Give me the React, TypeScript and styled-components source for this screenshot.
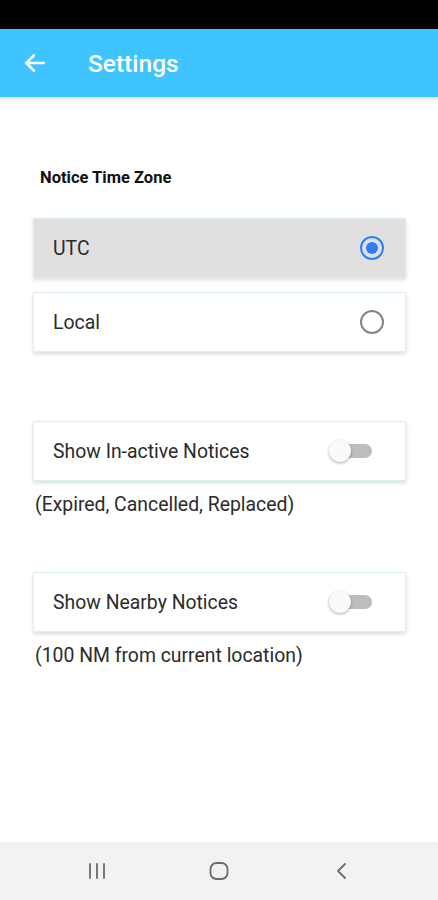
import React, { useState } from 'react';
import styled, { createGlobalStyle } from 'styled-components';

const GlobalStyle = createGlobalStyle`
  html, body {
    margin: 0;
    padding: 0;
    background: #ffffff;
    font-family: Roboto, "Noto Sans", Arial, sans-serif;
  }
  * { box-sizing: border-box; }
`;

const Screen = styled.div`
  display: flex;
  flex-direction: column;
  min-height: 100vh;
`;

const StatusBar = styled.div`
  height: 29px;
  background: #000;
`;

const AppBar = styled.header`
  height: 68px;
  background: #40c4ff;
  display: flex;
  align-items: center;
  padding-left: 22px;
  gap: 40px;
  box-shadow: 0 2px 3px rgba(0, 0, 0, 0.12);
`;

const Title = styled.h1`
  margin: 0;
  color: #fff;
  font-size: 24.5px;
  font-weight: 500;
`;

const Main = styled.main`
  flex: 1;
  display: flex;
  flex-direction: column;
  padding: 71px 32px 0 33px;
`;

const SectionLabel = styled.div`
  font-size: 16.5px;
  font-weight: 700;
  color: #111;
  line-height: 20px;
  padding-left: 7px;
  margin-bottom: 30px;
`;

const Card = styled.div<{ $selected?: boolean; $gap?: number }>`
  height: 60px;
  display: flex;
  align-items: center;
  justify-content: space-between;
  padding: 0 21px 0 19px;
  background: ${({ $selected }) => ($selected ? '#e0e0e0' : '#fff')};
  border: 1px solid #dcf1ec;
  box-shadow: 0 2px 4px rgba(0, 0, 0, 0.14);
  margin-top: ${({ $gap }) => $gap ?? 0}px;
  cursor: pointer;
`;

const CardText = styled.span`
  font-size: 19.4px;
  color: #2b2b2b;
`;

const Caption = styled.div`
  margin-top: 12px;
  padding-left: 2px;
  font-size: 19.4px;
  line-height: 24px;
  color: #2b2b2b;
`;

const RadioRing = styled.span<{ $on: boolean }>`
  width: 24px;
  height: 24px;
  border-radius: 50%;
  border: 2px solid ${({ $on }) => ($on ? '#2f7ef5' : '#858585')};
  display: flex;
  align-items: center;
  justify-content: center;
  &::after {
    content: '';
    width: 12px;
    height: 12px;
    border-radius: 50%;
    background: ${({ $on }) => ($on ? '#2f7ef5' : 'transparent')};
  }
`;

const SwitchBox = styled.span`
  position: relative;
  width: 46px;
  height: 24px;
  margin-right: 12px;
`;

const SwitchTrack = styled.span<{ $on: boolean }>`
  position: absolute;
  left: 10px;
  right: 0;
  top: 5px;
  height: 14px;
  border-radius: 7px;
  background: ${({ $on }) => ($on ? '#90caf9' : '#bdbdbd')};
`;

const SwitchThumb = styled.span<{ $on: boolean }>`
  position: absolute;
  top: 1px;
  left: ${({ $on }) => ($on ? 24 : 3)}px;
  width: 22px;
  height: 22px;
  border-radius: 50%;
  background: ${({ $on }) => ($on ? '#2f7ef5' : '#fafafa')};
  box-shadow: 0 1px 3px rgba(0, 0, 0, 0.35);
`;

const NavBar = styled.nav`
  height: 58px;
  background: #f2f2f2;
  display: flex;
  align-items: center;
  justify-content: center;
  gap: 82px;
`;

const NavButton = styled.span`
  width: 40px;
  display: flex;
  justify-content: center;
`;

const Switch = ({ on }: { on: boolean }) => (
  <SwitchBox>
    <SwitchTrack $on={on} />
    <SwitchThumb $on={on} />
  </SwitchBox>
);

export default function App() {
  const [zone, setZone] = useState<'UTC' | 'Local'>('UTC');
  const [inactive, setInactive] = useState(false);
  const [nearby, setNearby] = useState(false);

  return (
    <Screen>
      <GlobalStyle />
      <StatusBar />
      <AppBar>
        <svg width="26" height="26" viewBox="0 0 24 24" fill="none" stroke="#fff" strokeWidth="2.4" strokeLinecap="round" strokeLinejoin="round">
          <path d="M20 12H4" />
          <path d="M11 5l-7 7 7 7" />
        </svg>
        <Title>Settings</Title>
      </AppBar>
      <Main>
        <SectionLabel>Notice Time Zone</SectionLabel>
        <Card $selected={zone === 'UTC'} onClick={() => setZone('UTC')}>
          <CardText>UTC</CardText>
          <RadioRing $on={zone === 'UTC'} />
        </Card>
        <Card $selected={zone === 'Local'} $gap={14} onClick={() => setZone('Local')}>
          <CardText>Local</CardText>
          <RadioRing $on={zone === 'Local'} />
        </Card>
        <Card $gap={69} onClick={() => setInactive(!inactive)}>
          <CardText>Show In-active Notices</CardText>
          <Switch on={inactive} />
        </Card>
        <Caption>(Expired, Cancelled, Replaced)</Caption>
        <Card $gap={55} onClick={() => setNearby(!nearby)}>
          <CardText>Show Nearby Notices</CardText>
          <Switch on={nearby} />
        </Card>
        <Caption>(100 NM from current location)</Caption>
      </Main>
      <NavBar>
        <NavButton>
          <svg width="20" height="18" viewBox="0 0 20 18" fill="none" stroke="#6b6b6b" strokeWidth="1.8" strokeLinecap="round">
            <path d="M3 2v14M10 2v14M17 2v14" />
          </svg>
        </NavButton>
        <NavButton>
          <svg width="22" height="22" viewBox="0 0 22 22" fill="none" stroke="#6b6b6b" strokeWidth="1.8">
            <rect x="2.5" y="3" width="17" height="16" rx="6" />
          </svg>
        </NavButton>
        <NavButton>
          <svg width="14" height="20" viewBox="0 0 14 20" fill="none" stroke="#6b6b6b" strokeWidth="1.8" strokeLinecap="round" strokeLinejoin="round">
            <path d="M11 3L4 10l7 7" />
          </svg>
        </NavButton>
      </NavBar>
    </Screen>
  );
}
